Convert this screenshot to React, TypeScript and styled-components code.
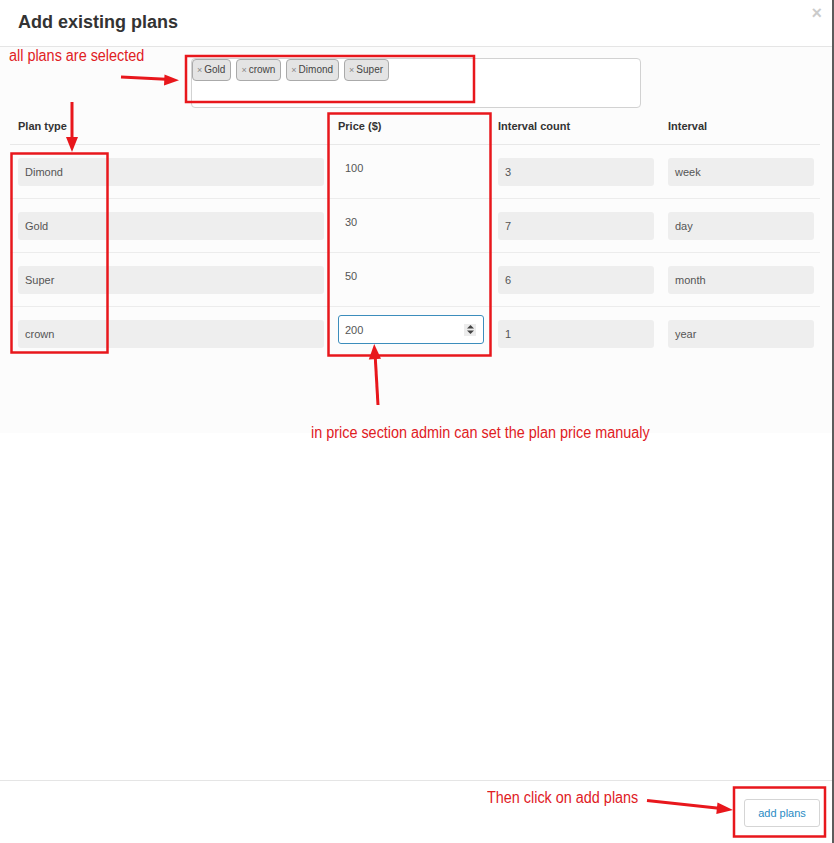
import styled, { createGlobalStyle } from "styled-components";

const GlobalStyle = createGlobalStyle`
  html, body {
    margin: 0;
    padding: 0;
    background: #fff;
  }
  body {
    font-family: "Liberation Sans", Arial, sans-serif;
  }
  * {
    box-sizing: border-box;
  }
`;

const Modal = styled.div`
  position: relative;
  width: 834px;
  height: 843px;
  display: flex;
  flex-direction: column;
  background: #fff;
  border-right: 2px solid #5c5c5c;
`;

const Header = styled.div`
  height: 47px;
  display: flex;
  justify-content: space-between;
  align-items: flex-start;
  padding: 0 10px 0 18px;
  border-bottom: 1px solid #e5e5e5;
`;

const Title = styled.h4`
  margin: 11px 0 0;
  font-size: 18px;
  line-height: 22px;
  font-weight: 700;
  color: #333;
`;

const Close = styled.span`
  margin-top: 4px;
  font-size: 18px;
  font-weight: 700;
  color: #000;
  opacity: 0.2;
  line-height: 18px;
`;

const Body = styled.div`
  background: #fcfcfc;
  padding: 11px 14px 72px 10px;
`;

const SelectRow = styled.div`
  padding-left: 181px;
`;

const MultiSelect = styled.div`
  width: 450px;
  height: 50px;
  border: 1px solid #d2d2d2;
  border-radius: 4px;
  background: #fff;
  display: flex;
  align-items: flex-start;
  gap: 5px;
`;

const Tag = styled.span`
  height: 22px;
  padding: 0 5px 0 4px;
  background: #e4e4e4;
  border: 1px solid #aaa;
  border-radius: 4px;
  font-size: 10px;
  line-height: 20px;
  color: #444;
  white-space: nowrap;
`;

const TagX = styled.span`
  color: #888;
  font-size: 9px;
  margin-right: 2px;
`;

const Table = styled.div`
  margin-top: 4px;
  display: grid;
  grid-template-columns: 320px 160px 170px 160px;
`;

const HeadCell = styled.div`
  height: 33px;
  padding: 7px 6px 0 8px;
  font-size: 11px;
  line-height: 14px;
  font-weight: 700;
  color: #333;
  border-bottom: 1px solid #e8e8e8;
`;

const Cell = styled.div<{ $last?: boolean }>`
  height: 54px;
  padding: 13px 6px 0 8px;
  border-bottom: ${(p) => (p.$last ? "none" : "1px solid #ececec")};
`;

const Field = styled.div`
  height: 28px;
  padding: 0 7px;
  background: #eee;
  border-radius: 3px;
  font-size: 11px;
  line-height: 28px;
  color: #555;
`;

const PriceText = styled.div`
  height: 28px;
  padding: 0 7px;
  font-size: 11px;
  line-height: 20px;
  color: #555;
`;

const PriceInput = styled.div`
  margin-top: -5px;
  height: 29px;
  padding: 0 7px 0 6px;
  display: flex;
  align-items: center;
  justify-content: space-between;
  background: #fff;
  border: 1px solid #3c8dbc;
  border-radius: 3px;
  font-size: 11px;
  color: #555;
`;

const Spinner = styled.span`
  display: flex;
  align-items: center;
  justify-content: center;
  width: 12px;
  height: 12px;
  background: #ececec;
`;

const Footer = styled.div`
  margin-top: auto;
  height: 63px;
  display: flex;
  justify-content: flex-end;
  padding: 18px 12px 0 0;
  border-top: 1px solid #e5e5e5;
`;

const AddButton = styled.button`
  width: 76px;
  height: 28px;
  background: #fff;
  border: 1px solid #d5d5d5;
  border-radius: 3px;
  color: #2a8bc4;
  font-family: "Liberation Sans", Arial, sans-serif;
  font-size: 11px;
  cursor: pointer;
`;

const Overlay = styled.svg`
  position: absolute;
  left: 0;
  top: 0;
  pointer-events: none;
`;

const Note = styled.span<{ $x: number; $y: number }>`
  position: absolute;
  left: ${(p) => p.$x}px;
  top: ${(p) => p.$y}px;
  font-family: "Liberation Sans Narrow", "Liberation Sans", Arial, sans-serif;
  font-size: 16px;
  line-height: 16px;
  color: #e0201f;
  white-space: nowrap;
  transform: scaleX(0.9);
  transform-origin: left top;
`;

const plans = [
  { name: "Dimond", price: "100", count: "3", interval: "week" },
  { name: "Gold", price: "30", count: "7", interval: "day" },
  { name: "Super", price: "50", count: "6", interval: "month" },
  { name: "crown", price: "200", count: "1", interval: "year" },
];

const tags = ["Gold", "crown", "Dimond", "Super"];

const RED = "#e8171c";

const App = () => {
  return (
    <>
      <GlobalStyle />
      <Modal>
        <Header>
          <Title>Add existing plans</Title>
          <Close>×</Close>
        </Header>
        <Body>
          <SelectRow>
            <MultiSelect>
              {tags.map((t) => (
                <Tag key={t}>
                  <TagX>×</TagX>
                  {t}
                </Tag>
              ))}
            </MultiSelect>
          </SelectRow>
          <Table>
            <HeadCell>Plan type</HeadCell>
            <HeadCell>Price ($)</HeadCell>
            <HeadCell>Interval count</HeadCell>
            <HeadCell>Interval</HeadCell>
            {plans.map((p, i) => {
              const last = i === plans.length - 1;
              return [
                <Cell key={p.name + "n"} $last={last}>
                  <Field>{p.name}</Field>
                </Cell>,
                <Cell key={p.name + "p"} $last={last}>
                  {last ? (
                    <PriceInput>
                      {p.price}
                      <Spinner>
                        <svg width="7" height="9" viewBox="0 0 7 9">
                          <path d="M3.5 0 L7 3.6 L0 3.6 Z" fill="#444" />
                          <path d="M3.5 9 L7 5.4 L0 5.4 Z" fill="#444" />
                        </svg>
                      </Spinner>
                    </PriceInput>
                  ) : (
                    <PriceText>{p.price}</PriceText>
                  )}
                </Cell>,
                <Cell key={p.name + "c"} $last={last}>
                  <Field>{p.count}</Field>
                </Cell>,
                <Cell key={p.name + "i"} $last={last}>
                  <Field>{p.interval}</Field>
                </Cell>,
              ];
            })}
          </Table>
        </Body>
        <Footer>
          <AddButton>add plans</AddButton>
        </Footer>

        {/* annotations drawn over the screenshot */}
        <Overlay width="834" height="843" viewBox="0 0 834 843">
          <g fill="none" stroke={RED} strokeWidth="2.5">
            <rect x="186" y="56" width="288" height="46" />
            <rect x="11.5" y="153.5" width="96" height="199" />
            <rect x="328.5" y="113.5" width="162" height="242" />
            <rect x="734" y="787.5" width="91" height="49" />
            <line x1="121" y1="77" x2="166" y2="79.3" strokeWidth="3" />
            <line x1="72" y1="102" x2="72" y2="139" strokeWidth="3" />
            <line x1="378" y1="405" x2="375.3" y2="358" strokeWidth="3" />
            <line x1="647" y1="800.5" x2="719" y2="808.3" strokeWidth="3" />
          </g>
          <g fill={RED}>
            <polygon points="179,80.2 164.5,74.4 164,85.6" />
            <polygon points="72,152 66,137 78,137" />
            <polygon points="374.2,344 368.8,359.5 381,358.8" />
            <polygon points="733,810 717.5,802.5 716.3,814" />
          </g>
        </Overlay>
        <Note $x={9} $y={48}>all plans are selected</Note>
        <Note $x={311} $y={425}>
          in price section admin can set the plan price manualy
        </Note>
        <Note $x={487} $y={790}>Then click on add plans</Note>
      </Modal>
    </>
  );
};

export default App;
